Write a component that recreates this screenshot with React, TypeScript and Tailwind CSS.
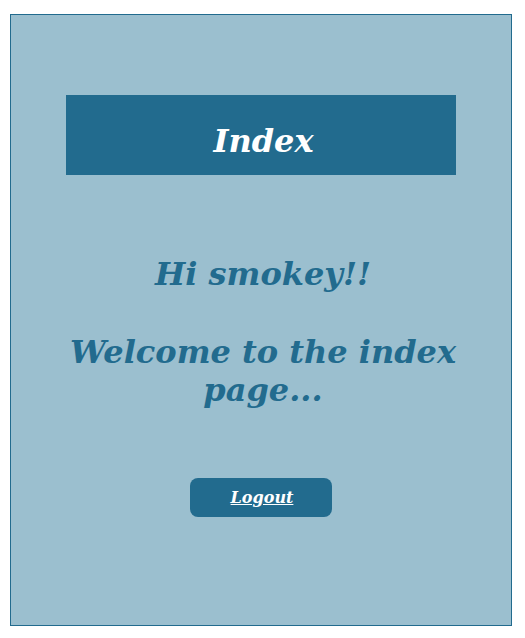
export default function App() {
	const serif = { fontFamily: '"DejaVu Serif", serif' };

	return (
		<div className="min-h-[638px] bg-white pt-[14px] pl-[10px]" style={serif}>
			{/* Card */}
			<div className="flex h-[612px] w-[502px] flex-col items-center border border-[#226b8e] bg-[#9bbfcf] pt-[80px]">
				{/* Title bar */}
				<div className="flex h-[80px] w-[390px] items-center justify-center bg-[#226b8e] pl-[5px]">
					<h1 className="mt-[12px] text-[32px] font-bold italic text-white">Index</h1>
				</div>

				{/* Greeting */}
				<div className="mt-[80px] pl-[4px] text-center text-[32px] font-bold italic leading-[38px] text-[#226b8e]">
					<p>Hi smokey!!</p>
					<p className="mt-[40px]">Welcome to the index page...</p>
				</div>

				{/* Logout */}
				<button className="mt-[69px] flex h-[39px] w-[142px] items-center justify-center rounded-[8px] bg-[#226b8e] pl-[2px] text-[16px] font-bold italic text-white underline">
					Logout
				</button>
			</div>
		</div>
	);
}
